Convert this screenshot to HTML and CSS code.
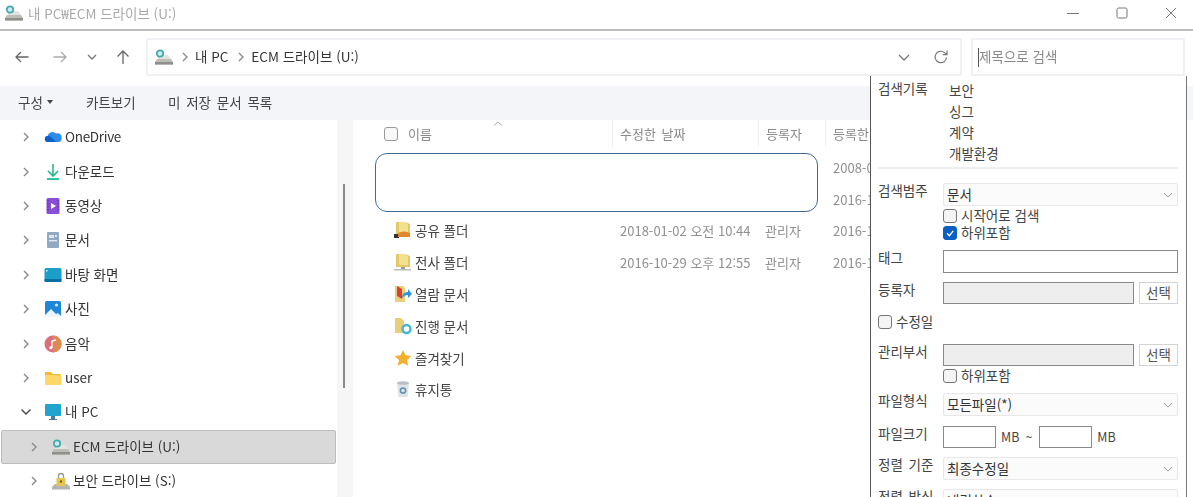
FILE: index.html
```html
<!DOCTYPE html>
<html lang="ko">
<head>
<meta charset="utf-8">
<title>내 PC₩ECM 드라이브 (U:)</title>
<link rel="stylesheet" href="styles.css">
</head>
<body>
<svg class="defs" aria-hidden="true">
  <symbol id="drive" viewBox="0 0 18 16">
    <path d="M2 10h14l2 3v2.500H0V13z" fill="#bdbdb8"/>
    <path d="M0 13h18v2.500H0z" fill="#8f908c"/>
    <path d="M6 6h7l3 4H2z" fill="#e2e2de"/>
    <circle cx="5" cy="4.500" r="3.200" fill="#cfe9ea" stroke="#45aab0" stroke-width="1.800"/>
  </symbol>
  <symbol id="chev" viewBox="0 0 8 12">
    <path d="M2 2l4 4-4 4" fill="none" stroke="#8a8a8a" stroke-width="1.400"/>
  </symbol>
</svg>

<header class="titlebar">
  <svg class="title-icon"><use href="#drive"/></svg>
  <span class="title-text">내 PC₩ECM 드라이브 (U:)</span>
  <div class="winctl">
    <svg width="12" height="12" viewBox="0 0 12 12"><path d="M0 6.500h12" stroke="#777" stroke-width="1"/></svg>
    <svg width="12" height="12" viewBox="0 0 12 12"><rect x="1" y="1" width="10" height="10" rx="1.500" fill="none" stroke="#777"/></svg>
    <svg width="12" height="12" viewBox="0 0 12 12"><path d="M1 1l10 10M11 1L1 11" stroke="#777"/></svg>
  </div>
</header>

<nav class="addressrow">
  <div class="navbtns">
    <svg width="14" height="12" viewBox="0 0 14 12"><path d="M13.500 6H1M6 1L1 6l5 5" fill="none" stroke="#666" stroke-width="1.300"/></svg>
    <svg width="14" height="12" viewBox="0 0 14 12"><path d="M.5 6H13M8 1l5 5-5 5" fill="none" stroke="#aaa" stroke-width="1.300"/></svg>
    <svg width="10" height="6" viewBox="0 0 10 6"><path d="M1 1l4 4 4-4" fill="none" stroke="#777" stroke-width="1.300"/></svg>
    <svg width="14" height="14" viewBox="0 0 14 14"><path d="M7 14V1M1.500 6.500L7 1l5.500 5.500" fill="none" stroke="#666" stroke-width="1.300"/></svg>
  </div>
  <div class="addressbox">
    <svg class="addr-icon"><use href="#drive"/></svg>
    <svg class="addr-chev"><use href="#chev"/></svg>
    <span>내 PC</span>
    <svg class="addr-chev"><use href="#chev"/></svg>
    <span>ECM 드라이브 (U:)</span>
    <svg class="addr-down" viewBox="0 0 12 7"><path d="M1 1l5 5 5-5" fill="none" stroke="#777" stroke-width="1.300"/></svg>
    <svg class="addr-refresh" viewBox="0 0 16 16"><path d="M13.500 8.500A5.700 5.700 0 1 1 11.500 3.600L14 5.600M14 1.500v4.200h-4.200" fill="none" stroke="#777" stroke-width="1.200"/></svg>
  </div>
  <div class="searchbox"><span class="caret"></span><span class="search-text">제목으로 검색</span></div>
</nav>

<div class="ribbon">
  <span class="rib-first">구성<i class="tri"></i></span>
  <span class="rib-cart">카트보기</span>
  <span>미 저장 문서 목록</span>
</div>

<div class="body">
  <aside class="tree">
    <div class="node">
      <svg class="chev"><use href="#chev"/></svg>
      <svg class="ico" viewBox="0 0 18 18"><path d="M4 14a3 3 0 0 1-.5-6A5 5 0 0 1 12 5.500 4 4 0 0 1 17.500 10 3 3 0 0 1 15 14z" fill="#2a8be8"/><path d="M1 11a3 3 0 0 1 3-3c3 0 5 3 8 6H4a3 3 0 0 1-3-3z" fill="#0f5fc4"/></svg>
      <span class="latin">OneDrive</span>
    </div>
    <div class="node">
      <svg class="chev"><use href="#chev"/></svg>
      <svg class="ico" viewBox="0 0 18 18"><path d="M9 1v11M4 8l5 5 5-5" fill="none" stroke="#2bb58f" stroke-width="1.600"/><path d="M3 16h12" stroke="#2bc3a0" stroke-width="2"/></svg>
      <span>다운로드</span>
    </div>
    <div class="node">
      <svg class="chev"><use href="#chev"/></svg>
      <svg class="ico" viewBox="0 0 18 18"><rect x="2.500" y="1" width="13" height="16" rx="1.500" fill="#8a4fd8"/><path d="M7 6l5 3-5 3z" fill="#fff"/><path d="M4 3v12M14 3v12" stroke="#5d2aa8" stroke-width="1.200" stroke-dasharray="1.500 1.500"/></svg>
      <span>동영상</span>
    </div>
    <div class="node">
      <svg class="chev"><use href="#chev"/></svg>
      <svg class="ico" viewBox="0 0 18 18"><rect x="3" y="1" width="12" height="16" rx="1" fill="#92a9c4"/><rect x="5" y="4" width="5" height="3" fill="#dfe6ee"/><rect x="11" y="4" width="2" height="2" fill="#dfe6ee"/><rect x="5" y="9" width="8" height="1.500" fill="#dfe6ee"/></svg>
      <span>문서</span>
    </div>
    <div class="node">
      <svg class="chev"><use href="#chev"/></svg>
      <svg class="ico" viewBox="0 0 18 18"><rect x="0.500" y="2" width="17" height="14" rx="1.500" fill="#1b9fc9"/><path d="M.5 13h17v2a1 1 0 0 1-1 1h-15a1 1 0 0 1-1-1z" fill="#0f6ea0"/><rect x="2" y="4" width="1.500" height="1.500" fill="#d6f2fa"/></svg>
      <span>바탕 화면</span>
    </div>
    <div class="node">
      <svg class="chev"><use href="#chev"/></svg>
      <svg class="ico" viewBox="0 0 18 18"><rect x="1" y="1" width="16" height="16" rx="1.500" fill="#1f86d8"/><circle cx="12.500" cy="5" r="1.600" fill="#cfeaff"/><path d="M1 15l6-6 5 5 2-1 3 3v1H1z" fill="#eaf5ff"/></svg>
      <span>사진</span>
    </div>
    <div class="node">
      <svg class="chev"><use href="#chev"/></svg>
      <svg class="ico" viewBox="0 0 18 18"><circle cx="9" cy="9" r="8.500" fill="#d9707a"/><path d="M9 .5a8.500 8.500 0 0 1 0 17z" fill="#e08a4f"/><path d="M8 13V6l4-1" fill="none" stroke="#fff" stroke-width="1.300"/><circle cx="6.800" cy="12.800" r="1.500" fill="#fff"/></svg>
      <span>음악</span>
    </div>
    <div class="node">
      <svg class="chev"><use href="#chev"/></svg>
      <svg class="ico" viewBox="0 0 18 18"><path d="M1 3h6l2 2h8v11H1z" fill="#f0b93a"/><path d="M1 6h16v10H1z" fill="#ffd766"/></svg>
      <span>user</span>
    </div>
    <div class="node open">
      <svg class="chev" viewBox="0 0 12 8"><path d="M1.500 1.500L6 6l4.500-4.500" fill="none" stroke="#444" stroke-width="1.400"/></svg>
      <svg class="ico" viewBox="0 0 18 18"><rect x="1" y="1" width="16" height="12" rx="1" fill="#22a4cf"/><path d="M7 13h4v3H7z" fill="#4a7f9c"/><path d="M5 16h8v1H5z" fill="#4a7f9c"/></svg>
      <span>내 PC</span>
    </div>
    <div class="node sub selected">
      <svg class="chev"><use href="#chev"/></svg>
      <svg class="ico"><use href="#drive"/></svg>
      <span>ECM 드라이브 (U:)</span>
    </div>
    <div class="node sub">
      <svg class="chev"><use href="#chev"/></svg>
      <svg class="ico" viewBox="0 0 18 18"><path d="M3 12h12l3 3v2.500H0V15z" fill="#b4b4b0"/><rect x="4.500" y="6" width="9" height="8" fill="#e5c452"/><path d="M6.500 6V4a2.500 2.500 0 0 1 5 0v2" fill="none" stroke="#9a9a94" stroke-width="1.300"/><rect x="8" y="8.500" width="2" height="2" fill="#6b5410"/></svg>
      <span>보안 드라이브 (S:)</span>
    </div>
  </aside>

  <div class="vscroll"><div class="thumb"></div></div>

  <main class="content">
    <div class="colhead">
      <span class="headbox"></span>
      <span class="col-name">이름
        <svg class="sort" viewBox="0 0 10 5"><path d="M1 4.500L5 1l4 3.500" fill="none" stroke="#aaa"/></svg>
      </span>
      <span class="col">수정한 날짜</span>
      <span class="col col-user">등록자</span>
      <span class="col">등록한 날짜</span>
    </div>
    <div class="rows">
      <div class="filerow"><span></span><span></span><span></span><span class="cell">2008-01-01</span></div>
      <div class="filerow"><span></span><span></span><span></span><span class="cell">2016-10-29</span></div>
      <div class="filerow">
        <span class="fname"><svg class="fico" viewBox="0 0 18 18"><path d="M2 1h9l5 2v12H2z" fill="#e4c766"/><path d="M5 1h6l3 2v10H5z" fill="#f3e192"/><path d="M0 13h5v4H0z" fill="#333"/><path d="M4 12c4-2 8-2 12 0v4H4z" fill="#e2872c"/></svg>공유 폴더</span>
        <span class="cell">2018-01-02 오전 10:44</span><span class="cell">관리자</span><span class="cell">2016-10-29</span>
      </div>
      <div class="filerow">
        <span class="fname"><svg class="fico" viewBox="0 0 18 18"><path d="M2 1h9l5 2v11H2z" fill="#e4c766"/><path d="M5 1h6l3 2v9H5z" fill="#f3e192"/><path d="M7 14h4v2H7z" fill="#9a9a94"/><path d="M0 16h17v1.500H0z" fill="#bcbcb6"/></svg>전사 폴더</span>
        <span class="cell">2016-10-29 오후 12:55</span><span class="cell">관리자</span><span class="cell">2016-10-29</span>
      </div>
      <div class="filerow">
        <span class="fname"><svg class="fico" viewBox="0 0 18 18"><path d="M1 1h8l2 2v14H1z" fill="#e9cf78"/><path d="M3 1l5 3v10L3 11z" fill="#d8413a"/><path d="M8 13c0-4 3-6 6-6V4l4 5-4 4v-3c-3 0-4 1-6 3z" fill="#2f95dc"/></svg>열람 문서</span>
      </div>
      <div class="filerow">
        <span class="fname"><svg class="fico" viewBox="0 0 18 18"><path d="M1 1h6l3 3v12H1z" fill="#e9cf78"/><circle cx="12.500" cy="12" r="4" fill="none" stroke="#44b4d8" stroke-width="2.400"/></svg>진행 문서</span>
      </div>
      <div class="filerow">
        <span class="fname"><svg class="fico" viewBox="0 0 18 18"><path d="M9 1l2.500 5.300 5.800.7-4.300 4 1.200 5.800L9 14l-5.200 2.800L5 11 .7 7l5.800-.7z" fill="#f5ae2d"/></svg>즐겨찾기</span>
      </div>
      <div class="filerow">
        <span class="fname"><svg class="fico" viewBox="0 0 18 18"><path d="M3 3h12l-1.500 14h-9z" fill="#dfe3e6"/><ellipse cx="9" cy="3" rx="6" ry="1.800" fill="#b9bfc4"/><circle cx="9" cy="10.500" r="2.600" fill="none" stroke="#5b8fb8" stroke-width="1.500"/></svg>휴지통</span>
      </div>
    </div>
    <div class="mask"></div>
  </main>
</div>

<section class="panel">
  <div class="history">
    <div class="plabel">검색기록</div>
    <ul class="hist-list">
      <li>보안</li>
      <li>싱그</li>
      <li>계약</li>
      <li>개발환경</li>
    </ul>
  </div>
  <hr class="rule">
  <div class="field first">
    <div class="plabel">검색범주</div>
    <div class="stack">
      <div class="select"><span>문서</span><svg viewBox="0 0 10 6"><path d="M1 1l4 4 4-4" fill="none" stroke="#999"/></svg></div>
      <label class="check gap1"><span class="box"></span>시작어로 검색</label>
      <label class="check"><span class="box on"><svg viewBox="0 0 10 10"><path d="M2.500 5.200l2 2 3.200-4" fill="none" stroke="#fff" stroke-width="1.100"/></svg></span>하위포함</label>
    </div>
  </div>
  <div class="field">
    <div class="plabel">태그</div>
    <div class="input"></div>
  </div>
  <div class="field">
    <div class="plabel">등록자</div>
    <div class="withbtn"><div class="input off"></div><div class="btn">선택</div></div>
  </div>
  <label class="check solo"><span class="box"></span>수정일</label>
  <div class="field wide">
    <div class="plabel">관리부서</div>
    <div class="stack">
      <div class="withbtn"><div class="input off"></div><div class="btn">선택</div></div>
      <label class="check gap1"><span class="box"></span>하위포함</label>
    </div>
  </div>
  <div class="field">
    <div class="plabel">파일형식</div>
    <div class="select"><span>모든파일(*)</span><svg viewBox="0 0 10 6"><path d="M1 1l4 4 4-4" fill="none" stroke="#999"/></svg></div>
  </div>
  <div class="field roomy">
    <div class="plabel">파일크기</div>
    <div class="sizes"><div class="input small"></div><span>MB</span><span class="tilde">~</span><div class="input small"></div><span>MB</span></div>
  </div>
  <div class="field">
    <div class="plabel">정렬 기준</div>
    <div class="select"><span>최종수정일</span><svg viewBox="0 0 10 6"><path d="M1 1l4 4 4-4" fill="none" stroke="#999"/></svg></div>
  </div>
  <div class="field">
    <div class="plabel">정렬 방식</div>
    <div class="select"><span>내림차순</span><svg viewBox="0 0 10 6"><path d="M1 1l4 4 4-4" fill="none" stroke="#999"/></svg></div>
  </div>
</section>
</body>
</html>
```
FILE: styles.css
```css
* { box-sizing: border-box; }
html, body { margin: 0; padding: 0; }
body {
  position: relative;
  width: 1193px;
  height: 497px;
  overflow: hidden;
  background: #fff;
  color: #333;
  font: 13.5px/16px "Noto Sans CJK KR", "Noto Sans", sans-serif;
  filter: blur(0.35px);
}
.defs { position: absolute; width: 0; height: 0; }

.titlebar {
  height: 31px;
  display: flex;
  align-items: center;
  padding: 0 0 3px 5px;
  border-bottom: 2px solid #bcbcbc;
}
.title-icon { width: 18px; height: 16px; margin-right: 5px; }
.title-text { color: #a9a9a9; }
.winctl { margin-left: auto; display: flex; gap: 37px; padding-right: 16px; }

.addressrow {
  height: 55px;
  display: flex;
  align-items: flex-start;
  padding-top: 7px;
}
.navbtns {
  width: 146px;
  height: 38px;
  display: flex;
  align-items: center;
  padding: 0 0 0 15px;
}
.navbtns svg:nth-child(1) { margin-right: 24px; }
.navbtns svg:nth-child(2) { margin-right: 20px; }
.navbtns svg:nth-child(3) { margin-right: 19px; }
.addressbox {
  width: 816px;
  height: 38px;
  display: flex;
  align-items: center;
  border: 2px solid #f0f1f4;
  border-radius: 2px;
  padding-left: 7px;
}
.addr-icon { width: 18px; height: 16px; margin-right: 6px; }
.addr-chev { width: 8px; height: 12px; margin: 0 6px 0 2px; }
.addressbox span { margin-right: 7px; padding-bottom: 2px; }
.addr-down { width: 12px; height: 7px; margin-left: auto; margin-right: 23px; }
.addr-refresh { width: 16px; height: 16px; margin-right: 11px; }
.searchbox {
  width: 214px;
  height: 38px;
  margin-left: 9px;
  display: flex;
  align-items: center;
  border: 2px solid #f0f1f4;
  padding-left: 5px;
  color: #8a8a8a;
}
.search-text { padding-bottom: 2px; }
.caret { width: 1px; height: 19px; background: #555; }

.ribbon {
  height: 34px;
  display: flex;
  align-items: center;
  padding: 0 0 2px 18px;
  background: #f3f5f8;
  color: #444;
  word-spacing: 2px;
}
.rib-first { width: 68px; display: flex; align-items: center; }
.rib-cart { width: 82px; }
.tri {
  margin-left: 4px;
  border: 3.5px solid transparent;
  border-top: 4px solid #444;
  border-bottom: 0;
}

.body { display: flex; height: 377px; }
.tree { width: 337px; }
.node {
  height: 34.4px;
  display: flex;
  align-items: center;
  padding-left: 22px;
}
.node span { padding-bottom: 2px; }
.latin { letter-spacing: -0.3px; }
.chev { width: 8px; height: 12px; margin-right: 14px; }
.open .chev { width: 12px; height: 8px; margin-left: -2px; margin-right: 12px; }
.ico { width: 18px; height: 18px; margin-right: 3px; }
.sub { padding-left: 30px; }
.selected {
  margin-left: 1px;
  width: 335px;
  padding-left: 28px;
  background: #d9d9d9;
  border: 1px solid #bdbdbd;
  border-radius: 2px;
}
.vscroll { width: 16px; background: #f6f6f6; padding: 64px 0 0 6px; }
.thumb { width: 2px; height: 204px; background: #8a8a8a; }

.content { position: relative; flex: 1; min-width: 0; }
.colhead {
  height: 27px;
  display: flex;
  align-items: center;
  padding-left: 31px;
  color: #8a8a8a;
  font-size: 13px;
  word-spacing: 2px;
}
.headbox {
  width: 14px;
  height: 14px;
  border: 1px solid #999;
  border-radius: 3px;
  background: #f8f8f8;
  margin-right: 10px;
}
.col-name { position: relative; width: 204px; }
.sort { position: absolute; left: 85px; top: -5px; width: 10px; height: 5px; }
.col {
  width: 146px;
  height: 27px;
  line-height: 27px;
  padding-left: 7px;
  border-left: 1px solid #f0f0f0;
  white-space: nowrap;
}
.col-user { width: 67px; }

.rows { padding-left: 41px; padding-top: 5px; }
.filerow {
  height: 31.8px;
  display: grid;
  grid-template-columns: 226px 145px 68px 120px;
  align-items: center;
}
.fname { display: flex; align-items: center; color: #444; padding-bottom: 2px; }
.fico { width: 18px; height: 18px; margin-right: 3px; }
.cell { color: #909090; font-size: 13px; white-space: nowrap; }

.mask {
  position: absolute;
  left: 22px;
  top: 33px;
  width: 443px;
  height: 59px;
  background: #fff;
  border: 1px solid #3f6b98;
  border-radius: 12px;
}

.panel {
  position: absolute;
  left: 870px;
  top: 76px;
  width: 317px;
  height: 440px;
  padding: 3px 8px 0 7px;
  background: #fff;
  border-left: 1px solid #555;
  border-right: 1.5px solid #777;
}
.plabel { width: 65px; margin-top: -1px; line-height: 16px; white-space: nowrap; color: #444; word-spacing: 2px; }
.history { display: flex; padding-top: 1px; }
.history .plabel { margin-top: 0; }
.hist-list { margin: 0; padding: 0 0 0 6px; list-style: none; line-height: 21px; color: #444; }
.rule { margin: 3px 0 0; border: 0; height: 2px; background: #eee; }
.field { display: flex; margin-top: 9px; }
.first { margin-top: 14px; }
.wide { margin-top: 14px; }
.roomy { margin-top: 10px; }
.stack { width: 235px; }
.select {
  width: 235px;
  height: 23px;
  display: flex;
  align-items: center;
  justify-content: space-between;
  padding: 0 4px 0 3px;
  border: 1px solid #e8e8e8;
  border-radius: 2px;
  background: #fbfbfb;
  color: #333;
}
.select span { padding-bottom: 2px; }
.select svg { width: 10px; height: 6px; }
.check { display: flex; align-items: center; height: 17px; padding-bottom: 2px; color: #444; }
.gap1 { margin-top: 1px; }
.box {
  width: 14px;
  height: 14px;
  margin-top: 2px;
  margin-right: 4px;
  border: 1px solid #777;
  border-radius: 3px;
  background: #f4f4f4;
}
.box.on { background: #0a5fc0; border-color: #0a5fc0; display: flex; }
.box.on svg { width: 12px; height: 12px; }
.solo { margin-top: 9px; }
.input {
  width: 235px;
  height: 23px;
  border: 1.5px solid #8a8a8a;
  background: #fff;
}
.withbtn { display: flex; gap: 5px; width: 235px; }
.input.off { width: 191px; height: 22px; background: #eee; }
.btn {
  width: 39px;
  height: 22px;
  border: 1px solid #d4d4d4;
  text-align: center;
  line-height: 18px;
  color: #555;
}
.sizes { display: flex; align-items: center; color: #444; }
.input.small { width: 53px; height: 22px; }
.sizes span { margin-left: 5px; font-size: 12.5px; }
.sizes .tilde { margin-left: 6px; margin-right: 7px; }
```
